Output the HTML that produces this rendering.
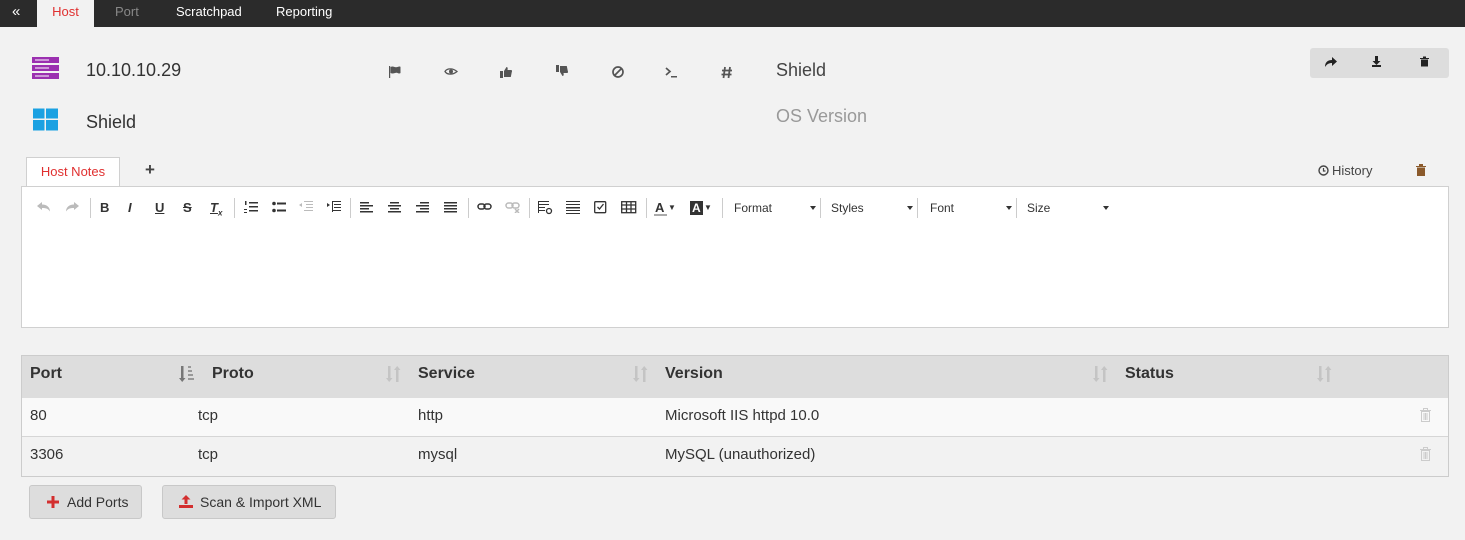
<!DOCTYPE html>
<html><head><meta charset="utf-8"><style>
*{box-sizing:border-box;margin:0;padding:0}
body{width:1465px;height:540px;background:#f2f2f2;font-family:"Liberation Sans",sans-serif;position:relative;overflow:hidden;color:#333}
.a{position:absolute}
.top{left:0;top:0;width:1465px;height:27px;background:#2b2b2b}
.tab{top:0;height:27px;font-size:13px;line-height:24px;color:#fff}
.tb{top:186px;left:21px;width:1428px;height:42px;background:#fff;border:1px solid #d0d0d0}
.tb span{position:absolute;top:13px;font-size:13px;font-weight:bold;color:#333}
.tb svg{position:absolute;top:14px}
.sep{position:absolute;top:11px;width:1px;height:20px;background:#ccc}
.dd{position:absolute;top:14px;font-size:12px;color:#333}
.dd:after{content:"";position:absolute;right:4px;top:5px;border:3px solid transparent;border-top:4px solid #333}
.cell{font-size:15px}
.btn{top:485px;height:34px;background:#ddd;border:1px solid #c8c8c8;border-radius:3px;font-size:15px;line-height:32px;color:#333}
</style></head><body>
<div class="a top"></div>
<div class="a tab" style="left:12px;font-size:15px">«</div>
<div class="a" style="left:37px;top:0;width:57px;height:27px;background:#f2f2f2;color:#e03030;font-size:13px;line-height:24px;text-align:center">Host</div>
<div class="a tab" style="left:115px;color:#888">Port</div>
<div class="a tab" style="left:176px">Scratchpad</div>
<div class="a tab" style="left:276px">Reporting</div>

<svg class="a" style="left:32px;top:57px" width="27" height="22"><rect x="0" y="0" width="27" height="6" fill="#9b30b0"/><rect x="0" y="8" width="27" height="6" fill="#9b30b0"/><rect x="0" y="16" width="27" height="6" fill="#9b30b0"/><g stroke="#fff" stroke-width="1"><line x1="3" y1="3" x2="17" y2="3"/><line x1="3" y1="11" x2="17" y2="11"/><line x1="3" y1="19" x2="17" y2="19"/></g></svg>
<div class="a" style="left:86px;top:60px;font-size:18px">10.10.10.29</div>
<svg class="a" style="left:33px;top:107px" width="25" height="25"><path d="M0 1.5H11.5V11.5H0ZM13 1.5H25V11.5H13ZM0 13H11.5V23.5H0ZM13 13H25V23.5H13Z" fill="#1ba1e2"/></svg>
<div class="a" style="left:86px;top:112px;font-size:18px">Shield</div>

<svg class="a" style="left:388px;top:64px" width="360" height="18" fill="#555">
<path d="M1 2h1.2v12H1zM2.5 3c3-1.5 4 1 7 0s3 0 3 0v6s-1 1-3 0-4 1.5-7 0z"/>
<path d="M57 7.5c2-3.5 8-3.5 12 0c-4 3.5-10 3.5-12 0z" fill="none" stroke="#555" stroke-width="1.3"/><circle cx="63" cy="7.5" r="2"/>
<path d="M112 7h3v7h-3zM116 7l2.5-4c1 0 1.5 1 1 3h3.5c1 0 1.3 1 .8 2l-1 5h-6.8z"/>
<path d="M168 8h3V1h-3zM172 8l2.5 4c1 0 1.5-1 1-3h3.5c1 0 1.3-1 .8-2l-1-5h-6.8z"/>
<circle cx="230" cy="8" r="5" fill="none" stroke="#555" stroke-width="1.7"/><path d="M226.5 11.5l7-7" stroke="#555" stroke-width="1.7"/>
<path d="M278 4l4 3.5-4 3.5" fill="none" stroke="#555" stroke-width="1.7"/><path d="M283 12h6v1.5h-6z"/>
<path d="M337 3l-1.5 11M342 3l-1.5 11M334 6.5h10M333.5 10.5h10" stroke="#555" stroke-width="1.8"/>
</svg>
<div class="a" style="left:776px;top:60px;font-size:18px;color:#444">Shield</div>
<div class="a" style="left:776px;top:106px;font-size:18px;color:#999">OS Version</div>

<div class="a" style="left:1310px;top:48px;width:139px;height:30px;background:#ddd;border-radius:3px"></div>
<svg class="a" style="left:1310px;top:48px" width="139" height="30" fill="#222">
<path d="M15 19c0-5 3-7 7-7v-3l5 4.5-5 4.5v-3c-3 0-5 1-7 4z"/>
<path d="M65 8h3v5h2.5l-4 4-4-4h2.5zM62 17h9v2h-9z"/>
<path d="M110 10h9v1h-9zM113 8.5h3v1.5h-3zM111 11.5h7v7h-7z"/>
</svg>

<div class="a" style="left:26px;top:157px;width:94px;height:30px;background:#fff;border:1px solid #d0d0d0;border-bottom:none;color:#e03030;font-size:13px;text-align:center;line-height:27px">Host Notes</div>
<div class="a" style="left:145px;top:160px;font-size:17px;font-weight:bold;color:#444">+</div>
<svg class="a" style="left:1318px;top:165px" width="11" height="11"><circle cx="5.5" cy="5.5" r="4.5" fill="none" stroke="#444" stroke-width="1.4"/><path d="M5.5 3v3h2" fill="none" stroke="#444" stroke-width="1.2"/></svg>
<div class="a" style="left:1332px;top:163px;font-size:13px;color:#444">History</div>
<svg class="a" style="left:1416px;top:164px" width="10" height="12" fill="#8b5a2b"><path d="M0 2h10v1H0zM3 0h4v2H3zM1 3.5h8V12H1z"/></svg>

<div class="a tb">
<svg style="left:15px" width="14" height="12" fill="#bbb"><path d="M0 5l5-4v2.5c5 0 8 3 8 7-2-3-4-3.5-8-3.5V9z"/></svg>
<svg style="left:43px" width="14" height="12" fill="#bbb"><path d="M14 5l-5-4v2.5c-5 0-8 3-8 7 2-3 4-3.5 8-3.5V9z"/></svg>
<div class="sep" style="left:68px"></div>
<span style="left:78px">B</span><span style="left:106px;font-style:italic">I</span><span style="left:133px;text-decoration:underline">U</span><span style="left:161px;text-decoration:line-through">S</span><span style="left:188px;font-style:italic;text-decoration:underline">T<sub style="font-size:8px">x</sub></span>
<div class="sep" style="left:212px"></div>
<svg style="left:222px" width="14" height="12" fill="#333"><path d="M5 1h9v1.5H5zM5 5h9v1.5H5zM5 9h9v1.5H5zM1 0h1.5v4H1zM0 8h3v1H0zM0 11h3v1H0z"/></svg>
<svg style="left:250px" width="14" height="12" fill="#333"><circle cx="2" cy="2.5" r="1.8"/><circle cx="2" cy="9.5" r="1.8"/><path d="M5 1.5h9v2H5zM5 8.5h9v2H5z"/></svg>
<svg style="left:277px" width="14" height="12" fill="#bbb"><path d="M5 0h9v1H5zM7 3h7v1H7zM7 6h7v1H7zM5 9h9v1H5zM0 4l3-2v4z"/></svg>
<svg style="left:305px" width="14" height="12" fill="#333"><path d="M5 0h9v1H5zM7 3h7v1H7zM7 6h7v1H7zM5 9h9v1H5zM3 4L0 2v4z"/><rect x="5" y="0" width="1" height="11"/></svg>
<div class="sep" style="left:328px"></div>
<svg style="left:338px" width="13" height="12" fill="#333"><path d="M0 1h9v1.5H0zM0 4h13v1.5H0zM0 7h9v1.5H0zM0 10h13v1.5H0z"/></svg>
<svg style="left:366px" width="13" height="12" fill="#333"><path d="M2 1h9v1.5H2zM0 4h13v1.5H0zM2 7h9v1.5H2zM0 10h13v1.5H0z"/></svg>
<svg style="left:394px" width="13" height="12" fill="#333"><path d="M4 1h9v1.5H4zM0 4h13v1.5H0zM4 7h9v1.5H4zM0 10h13v1.5H0z"/></svg>
<svg style="left:422px" width="13" height="12" fill="#333"><path d="M0 1h13v1.5H0zM0 4h13v1.5H0zM0 7h13v1.5H0zM0 10h13v1.5H0z"/></svg>
<div class="sep" style="left:446px"></div>
<svg style="left:455px" width="15" height="12" fill="none" stroke="#333" stroke-width="1.5"><rect x="1" y="3" width="7" height="5" rx="2.5"/><rect x="7" y="3" width="7" height="5" rx="2.5"/></svg>
<svg style="left:483px" width="15" height="12" fill="none" stroke="#bbb" stroke-width="1.5"><rect x="1" y="2" width="7" height="5" rx="2.5"/><rect x="7" y="2" width="7" height="5" rx="2.5"/><path d="M10 8l4 4M14 8l-4 4"/></svg>
<div class="sep" style="left:507px"></div>
<svg style="left:516px" width="15" height="14" fill="#333"><path d="M0 0h11v1H0zM0 3h11v1H0zM0 6h7v1H0zM0 9h7v1H0zM0 0h1v12H0z"/><circle cx="11" cy="10" r="2.5" fill="none" stroke="#333" stroke-width="1.3"/></svg>
<svg style="left:544px" width="14" height="14" fill="#333"><path d="M0 0h14v1H0zM0 3h14v1H0zM0 6h14v1.5H0zM0 9h14v1H0zM0 12h14v1H0z"/></svg>
<svg style="left:572px" width="13" height="13" fill="none" stroke="#333" stroke-width="1.3"><rect x="0.7" y="0.7" width="11" height="11" rx="1"/><path d="M3.5 6l2 2 4-5"/></svg>
<svg style="left:599px" width="16" height="13" fill="none" stroke="#333" stroke-width="1.3"><rect x="0.7" y="0.7" width="14" height="11"/><path d="M0 4h15M0 8h15M5.5 1v11M10 1v11"/></svg>
<div class="sep" style="left:624px"></div>
<span style="left:633px">A</span><div class="a" style="left:632px;top:27px;width:13px;height:2px;background:#aaa"></div><span style="left:646px;font-size:8px;top:16px">▼</span>
<span style="left:668px;background:#333;color:#fff;padding:0 2px;font-size:12px;top:14px">A</span><span style="left:682px;font-size:8px;top:16px">▼</span>
<div class="sep" style="left:700px"></div>
<div class="dd" style="left:712px;width:86px">Format</div>
<div class="sep" style="left:798px"></div>
<div class="dd" style="left:809px;width:86px">Styles</div>
<div class="sep" style="left:895px"></div>
<div class="dd" style="left:908px;width:86px">Font</div>
<div class="sep" style="left:994px"></div>
<div class="dd" style="left:1005px;width:86px">Size</div>
</div>
<div class="a" style="left:21px;top:227px;width:1428px;height:101px;background:#fff;border:1px solid #d0d0d0;border-top:none"></div>

<div class="a" style="left:21px;top:355px;width:1428px;height:122px;border:1px solid #ccc"></div>
<div class="a" style="left:22px;top:356px;width:1426px;height:42px;background:#ddd"></div>
<div class="a" style="left:22px;top:398px;width:1426px;height:39px;background:#f9f9f9;border-bottom:1px solid #d6d6d6"></div>
<div class="a" style="left:22px;top:438px;width:1426px;height:38px;background:#f2f2f2"></div>
<div class="a cell" style="left:30px;top:365px;font-weight:bold;font-size:16px">Port</div>
<div class="a cell" style="left:212px;top:365px;font-weight:bold;font-size:16px">Proto</div>
<div class="a cell" style="left:418px;top:365px;font-weight:bold;font-size:16px">Service</div>
<div class="a cell" style="left:665px;top:365px;font-weight:bold;font-size:16px">Version</div>
<div class="a cell" style="left:1125px;top:365px;font-weight:bold;font-size:16px">Status</div>
<svg class="a" style="left:179px;top:366px" width="17" height="17" fill="#777"><path d="M2 0h2.5v12h2L3.2 16 0 12h2z"/><path d="M9 0h3v2H9zM9 4h4v2H9zM9 8h5v2H9zM9 12h6v2H9z" fill="#999"/></svg>
<svg class="a" style="left:386px;top:366px" width="16" height="17" fill="#c4c4c4"><path d="M2 0h2.5v12h2L3.2 16 0 12h2zM10 16h2.5V4h2L11.2 0 8 4h2z"/></svg>
<svg class="a" style="left:633px;top:366px" width="16" height="17" fill="#c4c4c4"><path d="M2 0h2.5v12h2L3.2 16 0 12h2zM10 16h2.5V4h2L11.2 0 8 4h2z"/></svg>
<svg class="a" style="left:1093px;top:366px" width="16" height="17" fill="#c4c4c4"><path d="M2 0h2.5v12h2L3.2 16 0 12h2zM10 16h2.5V4h2L11.2 0 8 4h2z"/></svg>
<svg class="a" style="left:1317px;top:366px" width="16" height="17" fill="#c4c4c4"><path d="M2 0h2.5v12h2L3.2 16 0 12h2zM10 16h2.5V4h2L11.2 0 8 4h2z"/></svg>
<div class="a cell" style="left:30px;top:407px">80</div><div class="a cell" style="left:198px;top:407px">tcp</div><div class="a cell" style="left:418px;top:407px">http</div><div class="a cell" style="left:665px;top:407px">Microsoft IIS httpd 10.0</div>
<div class="a cell" style="left:30px;top:446px">3306</div><div class="a cell" style="left:198px;top:446px">tcp</div><div class="a cell" style="left:418px;top:446px">mysql</div><div class="a cell" style="left:665px;top:446px">MySQL (unauthorized)</div>
<svg class="a" style="left:1419px;top:408px" width="13" height="14" fill="none" stroke="#ccc"><path d="M1 2.5h11M4.5 2.5v-2h4v2M2.5 3.5h8v10h-8zM5 5v7M6.5 5v7M8 5v7"/></svg>
<svg class="a" style="left:1419px;top:447px" width="13" height="14" fill="none" stroke="#ccc"><path d="M1 2.5h11M4.5 2.5v-2h4v2M2.5 3.5h8v10h-8zM5 5v7M6.5 5v7M8 5v7"/></svg>

<div class="a btn" style="left:29px;width:113px"><svg style="position:absolute;left:17px;top:10px" width="12" height="12" fill="#d32f2f"><path d="M4.5 0h3v4.5H12v3H7.5V12h-3V7.5H0v-3h4.5z"/></svg><span style="position:absolute;left:37px;font-size:14px">Add Ports</span></div>
<div class="a btn" style="left:162px;width:174px"><svg style="position:absolute;left:16px;top:9px" width="14" height="13" fill="#d32f2f"><path d="M7 0l4.5 4.5H8.5V9h-3V4.5H2.5zM0 10h14v3H0z"/></svg><span style="position:absolute;left:37px;font-size:14px">Scan &amp; Import XML</span></div>
</body></html>
